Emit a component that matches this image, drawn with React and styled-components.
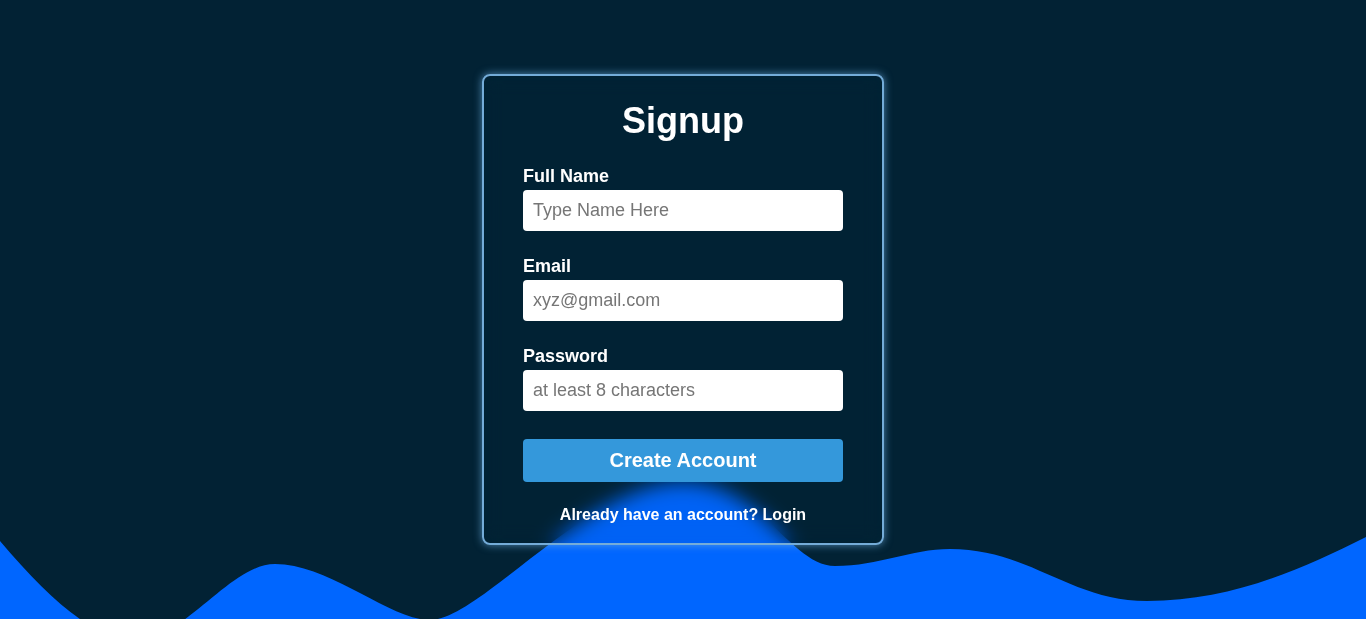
import React from 'react';
import styled, { createGlobalStyle } from 'styled-components';

const GlobalStyle = createGlobalStyle`
  * { box-sizing: border-box; }
  body {
    margin: 0;
    background: #022234;
    font-family: "Liberation Sans", Arial, sans-serif;
  }
`;

const Page = styled.div`
  position: relative;
  min-height: 100vh;
  overflow: hidden;
  display: flex;
  align-items: center;
  justify-content: center;
  background: #022234;
`;

const Wave = styled.svg`
  position: absolute;
  left: 0;
  bottom: 0;
  width: 100%;
  height: 140px;
  display: block;
`;

const Card = styled.form`
  position: relative;
  z-index: 1;
  width: 402px;
  padding: 25px 39px 19px;
  border: 2px solid #74acd8;
  border-radius: 8px;
  background: rgba(2, 34, 52, 0.05);
  backdrop-filter: blur(10px);
  box-shadow: 0 0 8px rgba(110, 175, 230, 0.7);
  display: flex;
  flex-direction: column;
`;

const Title = styled.h1`
  margin: 0 0 24px;
  font-size: 36px;
  line-height: 40px;
  font-weight: 700;
  color: #fff;
  text-align: center;
`;

const Fields = styled.div`
  display: flex;
  flex-direction: column;
  gap: 24px;
`;

const Field = styled.div`
  display: flex;
  flex-direction: column;
  gap: 3px;
`;

const Label = styled.label`
  font-size: 18px;
  line-height: 22px;
  font-weight: 700;
  color: #fff;
`;

const Input = styled.input`
  height: 41px;
  width: 100%;
  border: none;
  border-radius: 4px;
  padding: 0 10px;
  font-family: inherit;
  font-size: 18px;
  color: #222;
  background: #fff;
  outline: none;

  &::placeholder {
    color: #767676;
  }
`;

const Button = styled.button`
  margin-top: 28px;
  height: 43px;
  border: none;
  border-radius: 4px;
  background: #3498db;
  color: #fff;
  font-family: inherit;
  font-size: 20px;
  font-weight: 700;
  cursor: pointer;
`;

const Footer = styled.p`
  margin: 24px 0 0;
  font-size: 16px;
  line-height: 18px;
  font-weight: 700;
  color: #fff;
  text-align: center;
`;

const fields = [
  { id: 'name', label: 'Full Name', type: 'text', placeholder: 'Type Name Here' },
  { id: 'email', label: 'Email', type: 'email', placeholder: 'xyz@gmail.com' },
  { id: 'password', label: 'Password', type: 'password', placeholder: 'at least 8 characters' },
];

export default function App() {
  return (
    <>
      <GlobalStyle />
      <Page>
        <Wave viewBox="0 479 1366 140" preserveAspectRatio="none" aria-hidden="true">
          <path
            fill="#0066ff"
            d="M0 541
               C50 600 95 640 135 640
               C185 640 230 564 275 564
               C330 564 390 620 430 620
               C480 620 590 482 683 482
               C760 482 790 566 835 566
               C880 566 910 549 950 549
               C1030 549 1070 601 1147 601
               C1230 601 1300 570 1366 537
               L1366 640 L0 640 Z"
          />
        </Wave>
        <Card onSubmit={(e) => e.preventDefault()}>
          <Title>Signup</Title>
          <Fields>
            {fields.map((f) => (
              <Field key={f.id}>
                <Label htmlFor={f.id}>{f.label}</Label>
                <Input id={f.id} type={f.type} placeholder={f.placeholder} />
              </Field>
            ))}
          </Fields>
          <Button type="submit">Create Account</Button>
          <Footer>Already have an account? Login</Footer>
        </Card>
      </Page>
    </>
  );
}
